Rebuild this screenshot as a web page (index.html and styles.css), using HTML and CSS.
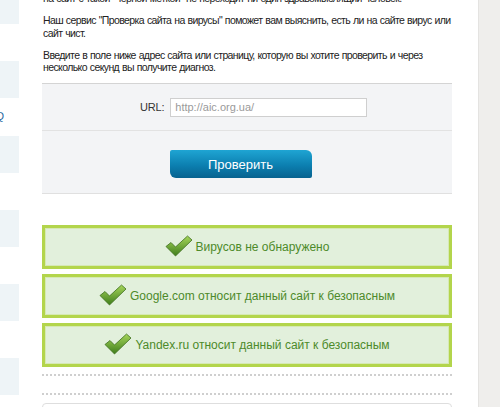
FILE: index.html
```html
<!DOCTYPE html>
<html lang="ru">
<head>
  <meta charset="UTF-8" />
  <title>Проверка сайта на вирусы</title>
  <link rel="stylesheet" href="styles.css">
</head>
<body>
  <div class="page">
    <div class="sidebar">
      <div class="side-block"></div>
      <div class="side-block"></div>
      <a class="side-link" href="#">FAQ</a>
      <div class="side-block"></div>
      <div class="side-block"></div>
      <div class="side-block"></div>
      <div class="side-block"></div>
    </div>

    <div class="main">
      <p class="intro cut">на сайт с такой "чёрной меткой" не переходит ни один здравомыслящий человек.</p>
      <p class="intro">Наш сервис "Проверка сайта на вирусы" поможет вам выяснить, есть ли на сайте вирус или сайт чист.</p>
      <p class="intro">Введите в поле ниже адрес сайта или страницу, которую вы хотите проверить и через несколько секунд вы получите диагноз.</p>

      <div class="check-form">
        <div class="form-row url-row">
          <label class="url-label" for="url">URL:</label>
          <input class="url-input" id="url" type="text" placeholder="http://aic.org.ua/">
        </div>
        <div class="form-row btn-row">
          <button class="check-btn">Проверить</button>
        </div>
      </div>

      <div class="results">
        <div class="result"><span class="tick"></span>Вирусов не обнаружено</div>
        <div class="result"><span class="tick"></span>Google.com относит данный сайт к безопасным</div>
        <div class="result"><span class="tick"></span>Yandex.ru относит данный сайт к безопасным</div>
      </div>

      <div class="dots"></div>
      <div class="dots second"></div>
      <div class="next-box">Й</div>
    </div>
  </div>

  <script>
    const tickSvg = `<svg width="28" height="22" viewBox="0 0 28 22">
      <defs>
        <linearGradient id="g" x1="0" y1="0" x2="0" y2="1">
          <stop offset="0" stop-color="#a6d65a"/>
          <stop offset="1" stop-color="#3f7d1c"/>
        </linearGradient>
      </defs>
      <path d="M1 11.5 L6 7.5 L10.5 12 L22.5 1 L27 5 L10.5 21 Z" fill="url(#g)" stroke="#3d6e1e" stroke-width="0.8" stroke-linejoin="round"/>
    </svg>`;
    document.querySelectorAll('.tick').forEach(el => el.innerHTML = tickSvg);
  </script>
</body>
</html>
```

FILE: styles.css
```css
body {
  margin: 0;
  background: #efeeec;
  font-family: "Liberation Sans", Arial, sans-serif;
  overflow: hidden;
}
.page {
  width: 479px;
  height: 407px;
  background: #fff;
  display: flex;
  overflow: hidden;
  border-right: 1px solid #e4e3e1;
  box-sizing: border-box;
}
.sidebar {
  width: 19px;
  flex: none;
  display: flex;
  flex-direction: column;
  align-items: flex-end;
  overflow: hidden;
}
.side-block {
  width: 19px;
  height: 37px;
  background: #eef4f7;
  margin-bottom: 37px;
  flex: none;
}
.side-block:first-child {
  margin-top: -13px;
}
.side-link {
  font-size: 11px;
  color: #2a6aa0;
  margin: -26px 15px 13px 0;
  line-height: 14px;
}
.main {
  width: 410px;
  margin-left: 23px;
  flex: none;
}
.intro {
  font-size: 10.5px;
  letter-spacing: -0.6px;
  word-spacing: 0.5px;
  line-height: 12.5px;
  color: #222;
  margin: 0 0 9.5px 1px;
}
.cut {
  margin-top: -8px;
}
.check-form {
  margin-top: 8px;
  background: #f3f4f6;
  border-top: 1px solid #d4d4d4;
  border-bottom: 1px solid #e0e0e0;
}
.form-row {
  display: flex;
  align-items: center;
  justify-content: center;
  height: 46px;
}
.url-row {
  justify-content: flex-start;
  padding-left: 98px;
}
.btn-row {
  border-top: 1px solid #e2e2e2;
  height: 62px;
  align-items: flex-start;
}
.url-label {
  font-size: 11px;
  letter-spacing: -0.2px;
  color: #333;
  margin-right: 6px;
}
.url-input {
  width: 197px;
  height: 19px;
  box-sizing: border-box;
  border: 1px solid #cfcfcf;
  padding: 0 4px;
  font-family: "Liberation Sans", Arial, sans-serif;
  font-size: 11px;
}
.url-input::placeholder {
  color: #9a9a9a;
}
.check-btn {
  margin-top: 19px;
  width: 142px;
  height: 28px;
  border: none;
  border-radius: 2px 6px 2px 6px;
  background: linear-gradient(#1fa5d3, #0c7fb0 55%, #07628f);
  color: #fff;
  font-family: "Liberation Sans", Arial, sans-serif;
  font-size: 13px;
  margin-right: 13px;
  cursor: pointer;
}
.results {
  margin-top: 31px;
  display: flex;
  flex-direction: column;
  gap: 5px;
}
.result {
  height: 44px;
  box-sizing: border-box;
  border: 3px solid #b3d54c;
  box-shadow: inset 0 0 0 1px #d6e9b4;
  background: #e2f0dc;
  display: flex;
  align-items: center;
  justify-content: center;
  font-size: 12px;
  color: #4d8a2a;
}
.tick {
  display: inline-flex;
  margin-right: 3px;
  margin-top: -2px;
}
.dots {
  margin-top: 7px;
  border-top: 2px dotted #cfcfcf;
}
.dots.second {
  margin-top: 17px;
}
.next-box {
  margin-top: 8px;
  height: 30px;
  border: 1px solid #dedede;
  border-radius: 4px;
  font-size: 11px;
  color: #333;
  padding: 3px 10px;
}
```
